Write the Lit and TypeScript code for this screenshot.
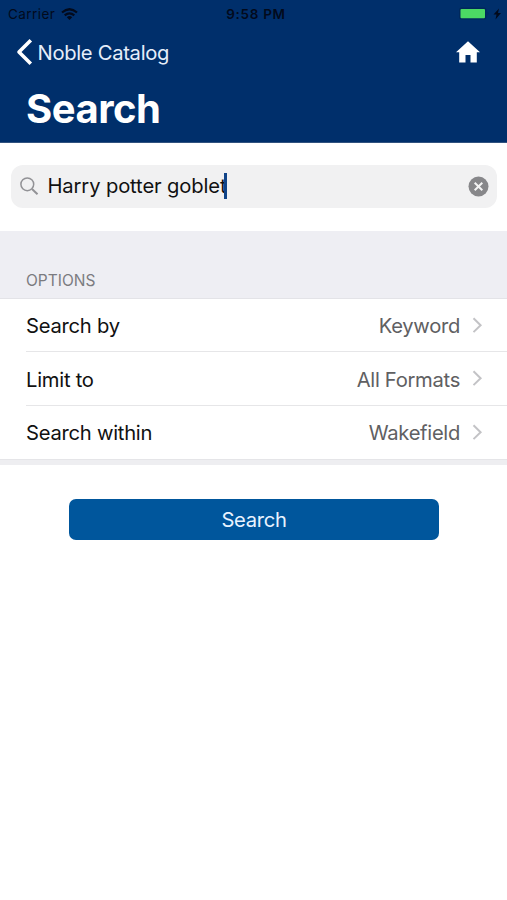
import { LitElement, html, css } from "lit";
import { customElement, property } from "lit/decorators.js";

@customElement("option-row")
class OptionRow extends LitElement {
  @property() label = "";
  @property() value = "";

  static styles = css`
    :host { display: block; padding-left: 26px; }
    .row {
      display: flex; align-items: center; box-sizing: border-box; height: 54px; padding: 2px 24px 0 0;
      border-bottom: 1px solid #e6e6e8; letter-spacing: -0.3px;
    }
    :host(:first-of-type) .row { height: 53px; }
    :host(:last-of-type) .row { height: 53px; padding-top: 1px; border-bottom: 0; }
    .label { flex: 1; color: #111; letter-spacing: -0.25px; }
    .value { color: #606062; }
    svg { margin: -3px 0 0 12px; }
  `;

  render() {
    return html`<div class="row">
      <span class="label">${this.label}</span>
      <span class="value">${this.value}</span>
      <svg width="11" height="18" viewBox="0 0 11 18" fill="none" stroke="#c3c3c6" stroke-width="2">
        <path d="M1.5 2.3 8.6 9.2 1.5 16.1" />
      </svg>
    </div>`;
  }
}

@customElement("app-root")
class AppRoot extends LitElement {
  static styles = css`
    * { box-sizing: border-box; }
    :host {
      display: flex; flex-direction: column; height: 900px; background: #fff;
      font-family: Inter, "Liberation Sans", sans-serif; font-size: 20.2px; line-height: 26px;
    }
    header { height: 143px; background: #002f6b; border-bottom: 1px solid #31527f; color: #fff; }
    .status {
      display: grid; grid-template-columns: 1fr auto 1fr; align-items: center; height: 27px;
      padding: 1px 5px 0 8px; color: #020a1c; font-size: 13.5px; line-height: 18px;
    }
    .carrier { display: flex; align-items: center; gap: 6px; letter-spacing: 0.45px; }
    .time { font-weight: 600; letter-spacing: 0.7px; margin-left: 2px; }
    .battery { display: flex; justify-content: flex-end; }
    .nav { display: flex; align-items: center; height: 50px; padding: 0 27px 0 16px; }
    .back { display: flex; align-items: center; flex: 1; gap: 4.5px; letter-spacing: -0.3px; color: #e6eefa; }
    .back span { padding-top: 1px; }
    h1 { margin: 6px 0 0 26px; font-size: 40px; line-height: 52px; font-weight: 700; letter-spacing: -0.5px; }
    .search { padding: 22px 10px 23px 11px; }
    .field {
      display: flex; align-items: center; height: 43px; border-radius: 12px; background: #f1f1f2;
      padding: 0 8px 0 9px; color: #111;
    }
    .query { margin: -1px 0 0 8.5px; letter-spacing: -0.13px; }
    .caret { width: 3px; height: 26px; margin: -1px auto 0 -2px; background: #114488; }
    .heading {
      display: flex; align-items: flex-end; height: 68px; background: #eeeef3; border-bottom: 1px solid #e3e3e7;
      padding: 0 26px 7px; color: #7b7b80; font-size: 15.5px; line-height: 20px;
    }
    .end { height: 6px; background: #eeeef1; border-top: 1px solid #e5e5e8; }
    .submit {
      width: 370px; height: 41px; margin: 34px 0 0 69px; padding: 0; border: 0; border-radius: 7px;
      background: #00569c; color: #e9f3ff; font: inherit; letter-spacing: -0.3px;
    }
  `;

  render() {
    return html`
      <header>
        <div class="status">
          <div class="carrier">
            <span>Carrier</span>
            <svg width="17" height="13" viewBox="0 0 17 13" fill="none" stroke="#020a1c" stroke-width="2.2">
              <path d="M1 4.5Q8.5-2 16 4.5M3.7 7.4Q8.5 3.3 13.3 7.4" />
              <path d="M5.8 9.2Q8.5 7 11.2 9.2L8.5 12Z" fill="#020a1c" stroke="none" />
            </svg>
          </div>
          <span class="time">9:58 PM</span>
          <div class="battery">
            <svg width="44" height="14" viewBox="0 0 44 14">
              <rect x="1" y="0.5" width="27.5" height="12" rx="2.5" fill="#00285b" />
              <path d="M29.5 4.5q2 2 0 4Z" fill="#00285b" />
              <rect x="2.5" y="2" width="24.5" height="9.3" rx="1" fill="#4cd964" />
              <path d="M41 1.5 35.5 7.5H38.5L37.5 12.5 43 6H40Z" fill="#020a1c" />
            </svg>
          </div>
        </div>
        <div class="nav">
          <div class="back">
            <svg width="17" height="28" viewBox="0 0 17 28" fill="none" stroke="#fff" stroke-width="3.6" stroke-linejoin="round">
              <path d="M14.8 2.3 3 14 14.8 25.7" />
            </svg>
            <span>Noble Catalog</span>
          </div>
          <svg width="24" height="22" viewBox="0 0 24 22" fill="#fff">
            <path d="M12 0.3 24 11.2H20.8V21.5H14.5V14H9.5V21.5H3.2V11.2H0Z" />
          </svg>
        </div>
        <h1>Search</h1>
      </header>
      <div class="search">
        <div class="field">
          <svg width="19" height="19" viewBox="0 0 19 19" fill="none" stroke="#929296" stroke-width="1.5">
            <circle cx="7.3" cy="7.3" r="6.4" /><path d="M12 12 17.5 17.2" stroke-width="2" />
          </svg>
          <span class="query">Harry potter goblet</span>
          <span class="caret"></span>
          <svg width="21" height="21" viewBox="0 0 21 21">
            <circle cx="10.5" cy="10.5" r="10" fill="#87878a" />
            <path d="M6.7 6.7 14.3 14.3M14.3 6.7 6.7 14.3" stroke="#f4f4f4" stroke-width="2" />
          </svg>
        </div>
      </div>
      <div class="heading">OPTIONS</div>
      <option-row label="Search by" value="Keyword"></option-row>
      <option-row label="Limit to" value="All Formats"></option-row>
      <option-row label="Search within" value="Wakefield"></option-row>
      <div class="end"></div>
      <button class="submit">Search</button>
    `;
  }
}
